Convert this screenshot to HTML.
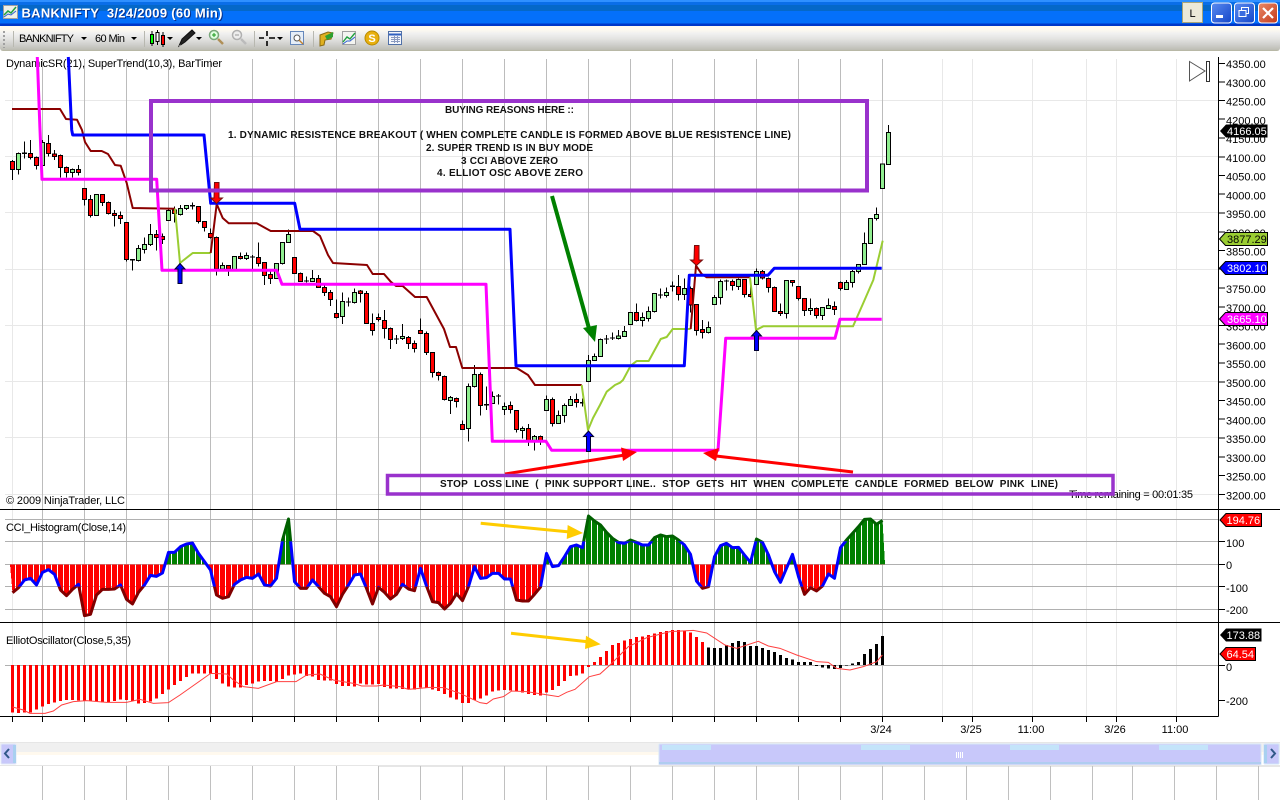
<!DOCTYPE html>
<html><head><meta charset="utf-8"><title>BANKNIFTY 3/24/2009 (60 Min)</title>
<style>
html,body{margin:0;padding:0;background:#fff;width:1280px;height:800px;overflow:hidden}
svg{display:block;font-family:"Liberation Sans",Arial,sans-serif}
text{white-space:pre}
.a{font-size:11px;fill:#000}
.b{font-size:10px;font-weight:bold;fill:#111}
.w{font-size:11px;fill:#fff}
</style></head><body>
<svg xmlns="http://www.w3.org/2000/svg" width="1280" height="800" viewBox="0 0 1280 800">
<defs>
<linearGradient id="tb" x1="0" y1="0" x2="0" y2="1">
<stop offset="0" stop-color="#2F90FF"/><stop offset=".07" stop-color="#2F90FF"/><stop offset=".08" stop-color="#0A6EE8"/><stop offset=".19" stop-color="#0A6EE8"/><stop offset=".2" stop-color="#0568C8"/><stop offset=".42" stop-color="#0568C8"/><stop offset=".43" stop-color="#0470FA"/><stop offset=".9" stop-color="#0470FA"/><stop offset=".91" stop-color="#0038C8"/><stop offset="1" stop-color="#0038C8"/>
</linearGradient>
<linearGradient id="tl" x1="0" y1="0" x2="0" y2="1">
<stop offset="0" stop-color="#FFFBF0"/><stop offset=".12" stop-color="#FFFBF0"/><stop offset=".3" stop-color="#F0F0F0"/><stop offset=".5" stop-color="#E4E4E2"/><stop offset=".75" stop-color="#CFCFCC"/><stop offset=".95" stop-color="#BDBDB4"/><stop offset="1" stop-color="#B4B49C"/>
</linearGradient>
<linearGradient id="mb" x1="0" y1="0" x2="1" y2="1"><stop offset="0" stop-color="#5A8BF0"/><stop offset="1" stop-color="#1446C8"/></linearGradient>
<linearGradient id="cb" x1="0" y1="0" x2="1" y2="1"><stop offset="0" stop-color="#E88A68"/><stop offset="1" stop-color="#C43A1A"/></linearGradient>
<pattern id="pr" patternUnits="userSpaceOnUse" x="12" y="0" width="18" height="18"><rect width="15" height="18" fill="#FF0000"/></pattern>
<pattern id="pg" patternUnits="userSpaceOnUse" x="12" y="0" width="18" height="18"><rect width="15" height="18" fill="#008000"/></pattern>
<clipPath id="cz1"><rect x="0" y="-100" width="3000" height="278"/></clipPath>
<clipPath id="cz2"><rect x="0" y="178" width="3000" height="400"/></clipPath>
<clipPath id="cl1"><rect x="0" y="-100" width="3000" height="209"/></clipPath>
<clipPath id="cl2"><rect x="0" y="109" width="3000" height="136"/></clipPath>
<clipPath id="cl3"><rect x="0" y="245" width="3000" height="400"/></clipPath>
<polyline id="ccil" fill="none" stroke-width="9" stroke-linejoin="round" points="37.5,263 55.5,248 73.5,225 91.5,220 109.5,240 127.5,202 145.5,194 163.5,208 181.5,255 199.5,272 217.5,253 235.5,238 253.5,332 271.5,328 289.5,270 307.5,253 325.5,253 343.5,252 361.5,240 379.5,283 397.5,297 415.5,262 433.5,240 451.5,211 469.5,214 487.5,204 505.5,142 523.5,142 541.5,125 559.5,117 577.5,114 595.5,145 613.5,170 631.5,195 649.5,270 667.5,280 685.5,275 703.5,238 721.5,225 739.5,217 757.5,220 775.5,207 793.5,240 811.5,243 829.5,220 847.5,105 865.5,42 883.5,230 901.5,250 919.5,250 937.5,225 955.5,245 973.5,265 991.5,275 1009.5,305 1027.5,268 1045.5,240 1063.5,210 1081.5,207 1099.5,250 1117.5,297 1135.5,247 1153.5,262 1171.5,282 1189.5,268 1207.5,238 1225.5,252 1243.5,257 1261.5,190 1279.5,243 1297.5,290 1315.5,293 1333.5,312 1351.5,295 1369.5,266 1387.5,287 1405.5,245 1423.5,185 1441.5,220 1459.5,218 1477.5,205 1495.5,205 1513.5,222 1531.5,222 1549.5,285 1567.5,288 1585.5,288 1603.5,268 1621.5,246 1639.5,145 1657.5,185 1675.5,182 1693.5,155 1711.5,125 1729.5,120 1747.5,128 1765.5,33 1783.5,48 1801.5,60 1819.5,82 1837.5,100 1855.5,112 1873.5,115 1891.5,105 1909.5,112 1927.5,120 1945.5,120 1963.5,98 1981.5,90 1999.5,95 2017.5,93 2035.5,105 2053.5,120 2071.5,148 2089.5,228 2107.5,250 2125.5,245 2143.5,155 2161.5,122 2179.5,115 2197.5,128 2215.5,127 2233.5,150 2251.5,172 2269.5,102 2287.5,112 2305.5,150 2323.5,200 2341.5,232 2359.5,190 2377.5,148 2395.5,215 2413.5,268 2431.5,248 2449.5,258 2467.5,243 2485.5,207 2503.5,220 2521.5,128 2539.5,105 2557.5,85 2575.5,65 2593.5,43 2611.5,42 2629.5,58 2647.5,46"/>
<polygon id="ccia" points="30,178 37.5,263 55.5,248 73.5,225 91.5,220 109.5,240 127.5,202 145.5,194 163.5,208 181.5,255 199.5,272 217.5,253 235.5,238 253.5,332 271.5,328 289.5,270 307.5,253 325.5,253 343.5,252 361.5,240 379.5,283 397.5,297 415.5,262 433.5,240 451.5,211 469.5,214 487.5,204 505.5,142 523.5,142 541.5,125 559.5,117 577.5,114 595.5,145 613.5,170 631.5,195 649.5,270 667.5,280 685.5,275 703.5,238 721.5,225 739.5,217 757.5,220 775.5,207 793.5,240 811.5,243 829.5,220 847.5,105 865.5,42 883.5,230 901.5,250 919.5,250 937.5,225 955.5,245 973.5,265 991.5,275 1009.5,305 1027.5,268 1045.5,240 1063.5,210 1081.5,207 1099.5,250 1117.5,297 1135.5,247 1153.5,262 1171.5,282 1189.5,268 1207.5,238 1225.5,252 1243.5,257 1261.5,190 1279.5,243 1297.5,290 1315.5,293 1333.5,312 1351.5,295 1369.5,266 1387.5,287 1405.5,245 1423.5,185 1441.5,220 1459.5,218 1477.5,205 1495.5,205 1513.5,222 1531.5,222 1549.5,285 1567.5,288 1585.5,288 1603.5,268 1621.5,246 1639.5,145 1657.5,185 1675.5,182 1693.5,155 1711.5,125 1729.5,120 1747.5,128 1765.5,33 1783.5,48 1801.5,60 1819.5,82 1837.5,100 1855.5,112 1873.5,115 1891.5,105 1909.5,112 1927.5,120 1945.5,120 1963.5,98 1981.5,90 1999.5,95 2017.5,93 2035.5,105 2053.5,120 2071.5,148 2089.5,228 2107.5,250 2125.5,245 2143.5,155 2161.5,122 2179.5,115 2197.5,128 2215.5,127 2233.5,150 2251.5,172 2269.5,102 2287.5,112 2305.5,150 2323.5,200 2341.5,232 2359.5,190 2377.5,148 2395.5,215 2413.5,268 2431.5,248 2449.5,258 2467.5,243 2485.5,207 2503.5,220 2521.5,128 2539.5,105 2557.5,85 2575.5,65 2593.5,43 2611.5,42 2629.5,58 2647.5,46 2655,178"/>
</defs>

<!-- title bar -->
<rect x="0" y="0" width="1280" height="26" fill="url(#tb)"/>
<rect x="3.5" y="5.5" width="14" height="13" fill="#F0F0E8" stroke="#A0A0A0"/>
<path d="M4 15l4-4 3 2 5-6" fill="none" stroke="#20A040" stroke-width="1.5"/><path d="M4 17l4-3 3 1 5-4" fill="none" stroke="#3060D0"/>
<text x="22.5" y="18.5" font-size="13" font-weight="bold" fill="#06308a" textLength="201">BANKNIFTY  3/24/2009 (60 Min)</text>
<text x="21.5" y="17.5" font-size="13" font-weight="bold" fill="#fff" textLength="201">BANKNIFTY  3/24/2009 (60 Min)</text>
<rect x="1182.5" y="2.5" width="20" height="20" fill="#ECE9D8" stroke="#A8A478"/>
<text x="1192.5" y="17" font-size="11" fill="#000" text-anchor="middle">L</text>
<rect x="1211.5" y="3" width="20" height="20" rx="3" fill="url(#mb)" stroke="#fff"/>
<rect x="1216" y="15" width="7" height="3" fill="#fff"/>
<rect x="1234.5" y="3" width="20" height="20" rx="3" fill="url(#mb)" stroke="#fff"/>
<rect x="1241.5" y="7.5" width="7" height="6" fill="none" stroke="#fff"/><rect x="1239" y="10.5" width="7" height="6" fill="#3A6CE0" stroke="#fff"/>
<rect x="1258.5" y="3" width="19" height="20" rx="3" fill="url(#cb)" stroke="#fff"/>
<path d="M1263 8l10 10M1273 8l-10 10" stroke="#fff" stroke-width="2.2"/>

<!-- toolbar -->
<rect x="0" y="26" width="1280" height="25" rx="3" fill="url(#tl)"/>
<path d="M4 31v17" stroke="#A0A0A0" stroke-width="2" stroke-dasharray="2 2"/>
<path d="M13.5 31v16M144.5 31v16M254.5 31v16M313.5 31v16" stroke="#B8B8B0"/>
<text x="19" y="42" class="a" fill="#000" textLength="55">BANKNIFTY</text>
<path d="M81 37h6l-3 3zM131 37h6l-3 3zM167 37h6l-3 3zM196 37h6l-3 3zM277 37h6l-3 3z" fill="#000"/>
<text x="95" y="42" class="a" textLength="30">60 Min</text>
<!-- candle icon -->
<path d="M152 31v15M157.500 30v15M163 32v15" stroke="#000"/>
<rect x="150.500" y="34.500" width="3" height="9" fill="#00FF00" stroke="#000"/><rect x="156" y="32.500" width="3" height="9" fill="#fff" stroke="#000"/><rect x="161.500" y="35.500" width="3" height="9" fill="#FF0000" stroke="#000"/>
<!-- pencil -->
<path d="M179 46l3-7 10-9 3 3-10 9z" fill="#222" stroke="#111"/><path d="M179 46l2-1" stroke="#888"/>
<!-- zoom in/out -->
<circle cx="214" cy="35" r="4.500" fill="#E0FFE0" stroke="#7AA87A" stroke-width="1.500"/><path d="M212 35h4M214 33v4" stroke="#1C9A1C"/><path d="M218 39l5 5" stroke="#B09058" stroke-width="2.500"/>
<circle cx="237" cy="35" r="4.500" fill="#EDEDED" stroke="#B0B0B0" stroke-width="1.500"/><path d="M235 35h4" stroke="#999"/><path d="M241 39l5 5" stroke="#BBB" stroke-width="2.500"/>
<!-- crosshair -->
<path d="M259 38h5M269 38h6M267 31v5M267 41v5" stroke="#000" stroke-width="1.600"/>
<!-- doc icon -->
<rect x="290.500" y="31.500" width="13" height="13" fill="#E6EEF8" stroke="#6688BB"/><circle cx="297" cy="38" r="3" fill="#fff" stroke="#555"/><path d="M299 40l4 4" stroke="#C08030" stroke-width="1.500"/>
<!-- compare icons -->
<path d="M320 35l8-3 5 1-2 6-6 1-1 5-4 1z" fill="#E0B020" stroke="#8A6A10"/><path d="M325 36l8-4v5l-6 3z" fill="#2EA030"/>
<rect x="342.500" y="31.500" width="13" height="13" fill="#F4F4F0" stroke="#A0A0A0"/><path d="M343 42l4-5 3 2 5-6" fill="none" stroke="#20A040" stroke-width="1.400"/><path d="M343 44l4-3 3 0 5-4" fill="none" stroke="#3060D0"/>
<circle cx="372" cy="38" r="7" fill="#E8B010" stroke="#B88A00"/><text x="372" y="42" font-size="11" font-weight="bold" fill="#fff" text-anchor="middle">S</text>
<rect x="388.500" y="31.500" width="13" height="13" fill="#F4F6FC" stroke="#5070A8"/><path d="M389 34.500h12" stroke="#3060C0" stroke-width="2"/><path d="M391 37.500h9M391 39.500h9M391 41.500h9M394.500 36v7M397.500 36v7" stroke="#8A9AC0"/>

<!-- grid -->
<path d="M5 100.500H1218M5 156.500H1218M5 212.500H1218M5 269.500H1218M5 325.500H1218M5 381.500H1218M5 437.500H1218M5 494.500H1218" stroke="#E8E8E8" fill="none"/>
<path d="M12.500 59V716M942.500 59V716M972.500 59V716M1032.500 59V716M1086.500 59V716M1116.500 59V716M1176.500 59V716" stroke="#E8E8E8" fill="none"/>
<path d="M42.500 59V716M84.500 59V716M126.500 59V716M168.500 59V716M210.500 59V716M252.500 59V716M294.500 59V716M336.500 59V716M378.500 59V716M420.500 59V716M462.500 59V716M504.500 59V716M546.500 59V716M588.500 59V716M630.500 59V716M672.500 59V716M714.500 59V716M756.500 59V716M798.500 59V716M840.500 59V716M882.500 59V716" stroke="#BCBCBC" fill="none"/>
<path d="M5 519.500H1218M5 541.500H1218M5 564.500H1218M5 586.500H1218M5 609.500H1218M5 665.500H1218" stroke="#B0B0B0" fill="none"/>

<text x="6" y="67" class="a" textLength="216">DynamicSR(21), SuperTrend(10,3), BarTimer</text>
<text x="6" y="504" class="a" textLength="119">© 2009 NinjaTrader, LLC</text>
<text x="6" y="531" class="a" textLength="120">CCI_Histogram(Close,14)</text>
<text x="6" y="644" class="a" textLength="125">ElliotOscillator(Close,5,35)</text>
<text x="1069" y="498" class="a" textLength="124">Time remaining = 00:01:35</text>

<!-- play icon -->
<path d="M1189.500 61.500L1205 71L1189.500 81Z" fill="#fff" stroke="#555"/><rect x="1206.500" y="61.500" width="3" height="20" fill="#fff" stroke="#333"/>

<!-- candles: block 1 -->
<g transform="translate(0,130) scale(.33333333)" shape-rendering="crispEdges">
<path fill="none" stroke="#000" stroke-width="3" d="M37.500 90V150M55.500 68V134M73.500 34V85M91.500 30V88M109.500 80V118M127.500 30V106M145.500 15V80M163.500 60V90M181.500 73V142M199.500 110V142M217.500 115V142M235.500 105V137M253.500 175V226M271.500 195V262M289.500 192V257M307.500 194V228M325.500 215V254M343.500 240V290M361.500 245V282M379.500 276V395M397.500 388V422M415.500 345V395M433.500 323V370M451.500 282V348M469.500 300V362M487.500 310V342M505.500 235V273M523.500 230V278M541.500 225V256M559.500 225V240M577.500 218V238M595.500 228V280M613.500 273V305M631.500 295V325M649.500 320V437M667.500 398V417M685.500 406V438M703.500 378V418M721.500 368V388M739.500 367V390M757.500 375V420M775.500 337V410M793.500 396V465M811.500 420V462M829.500 400V445M847.500 337V404M865.500 298V338M883.500 382V432"/>
<path fill="#FF0000" stroke="#000" stroke-width="3" d="M31.500 94h12V118h-12zM85.500 70h12V82h-12zM103.500 82h12V106h-12zM139.500 40h12V70h-12zM157.500 72h12V79h-12zM175.500 76h12V112h-12zM193.500 112h12V127h-12zM229.500 118h12V127h-12zM247.500 176h12V208h-12zM265.500 208h12V256h-12zM301.500 194h12V217h-12zM319.500 217h12V250h-12zM337.500 250h12V256h-12zM355.500 256h12V265h-12zM373.500 278h12V388h-12zM463.500 313h12V322h-12zM481.500 319h12V328h-12zM517.500 240h12V250h-12zM589.500 229h12V274h-12zM607.500 274h12V292h-12zM625.500 310h12V322h-12zM643.500 322h12V417h-12zM679.500 406h12V417h-12zM715.500 379h12V385h-12zM769.500 382h12V400h-12zM787.500 397h12V436h-12zM805.500 433h12V445h-12zM877.500 382h12V430h-12z"/>
<path fill="#90EE90" stroke="#000" stroke-width="3" d="M49.500 70h12V118h-12zM121.500 38h12V106h-12zM211.500 119h12V127h-12zM283.500 194h12V256h-12zM409.500 355h12V391h-12zM427.500 343h12V358h-12zM445.500 313h12V343h-12zM499.500 242h12V272h-12zM535.500 235h12V254h-12zM553.500 226h12V235h-12zM661.500 406h12V417h-12zM697.500 379h12V418h-12zM733.500 376h12V385h-12zM823.500 400h12V445h-12zM841.500 338h12V400h-12zM859.500 313h12V337h-12z"/>
<path fill="none" stroke="#000" stroke-width="4" d="M66 70h15M390 389h15M570 227h15M750 381h15"/>
</g>
<!-- candles: block 2 -->
<g transform="translate(300,270) scale(.33333333)" shape-rendering="crispEdges">
<path fill="none" stroke="#000" stroke-width="3" d="M1.500 8V36M19.500 20V38M37.500 0V36M55.500 15V52M73.500 45V78M91.500 60V108M109.500 88V145M127.500 67V162M145.500 82V110M163.500 55V100M181.500 60V98M199.500 63V162M217.500 130V197M235.500 130V155M253.500 120V205M271.500 172V237M289.500 195V222M307.500 162V210M325.500 198V237M343.500 212V248M361.500 145V190M379.500 185V255M397.500 247V322M415.500 305V332M433.500 317V392M451.500 378V432M469.500 382V412M487.500 452V480M505.500 340V515M523.500 285V352M541.500 308V437M559.500 350V420M577.500 365V402M595.500 372V403M613.500 398V435M631.500 395V430M649.500 420V487M667.500 470V505M685.500 462V528M703.500 495V542M721.500 497V525M739.500 376V422M757.500 382V470M775.500 422V460M793.500 400V457M811.500 378V408M829.500 370V412M847.500 385V410M865.500 255V335M883.500 250V272M901.500 205V260M919.500 195V222M937.500 187V210"/>
<path fill="#FF0000" stroke="#000" stroke-width="3" d="M-4.500 10h12V34h-12zM49.500 25h12V52h-12zM67.500 52h12V68h-12zM85.500 68h12V88h-12zM103.500 130h12V143h-12zM175.500 63h12V71h-12zM193.500 70h12V160h-12zM211.500 160h12V181h-12zM229.500 142h12V148h-12zM247.500 151h12V176h-12zM265.500 175h12V208h-12zM319.500 203h12V221h-12zM337.500 220h12V236h-12zM355.500 181h12V190h-12zM373.500 190h12V247h-12zM391.500 247h12V307h-12zM409.500 308h12V316h-12zM427.500 319h12V388h-12zM463.500 385h12V395h-12zM481.500 464h12V478h-12zM535.500 313h12V406h-12zM625.500 406h12V418h-12zM643.500 421h12V478h-12zM679.500 475h12V515h-12zM715.500 499h12V512h-12zM751.500 388h12V461h-12zM823.500 388h12V397h-12z"/>
<path fill="#90EE90" stroke="#000" stroke-width="3" d="M31.500 25h12V35h-12zM121.500 94h12V140h-12zM157.500 67h12V97h-12zM301.500 199h12V206h-12zM445.500 382h12V391h-12zM499.500 350h12V475h-12zM517.500 313h12V350h-12zM571.500 380h12V401h-12zM607.500 409h12V418h-12zM661.500 475h12V481h-12zM697.500 499h12V515h-12zM733.500 388h12V422h-12zM769.500 436h12V460h-12zM787.500 406h12V436h-12zM805.500 388h12V406h-12zM859.500 271h12V334h-12zM877.500 259h12V271h-12zM895.500 208h12V259h-12z"/>
<path fill="none" stroke="#000" stroke-width="4" d="M12 33h15M138 96h15M282 207h15M552 404h15M588 378h15M840 398h15M912 207h15M930 204h15"/>
</g>
<!-- candles: block 3 -->
<g transform="translate(580,200) scale(.33333333)" shape-rendering="crispEdges">
<path fill="none" stroke="#000" stroke-width="3" d="M115.500 390V418M133.500 378V410M151.500 336V375M169.500 310V365M187.500 338V380M205.500 320V365M223.500 280V337M241.500 265V295M259.500 262V292M277.500 245V275M295.500 225V302M313.500 235V300M331.500 260V338M349.500 313V407M367.500 360V415M385.500 365V400M403.500 285V314M421.500 238V314M439.500 238V272M457.500 238V272M475.500 236V270M493.500 237V292M511.500 232V292M529.500 205V253M547.500 210V238M565.500 232V278M583.500 260V335M601.500 310V348M619.500 240V355M637.500 240V260M655.500 258V302M673.500 295V348M691.500 295V345M709.500 323V355M727.500 322V360M745.500 295V327M763.500 305V345M781.500 245V272M799.500 240V270M817.500 210V262M835.500 192V220M853.500 97V193M871.500 55V131M889.500 22V62M907.500 -108V-35M925.500 -225V-107"/>
<path fill="#FF0000" stroke="#000" stroke-width="3" d="M163.500 338h12V361h-12zM289.500 259h12V283h-12zM325.500 265h12V315h-12zM343.500 313h12V391h-12zM361.500 388h12V397h-12zM451.500 244h12V257h-12zM487.500 238h12V283h-12zM505.500 284h12V290h-12zM541.500 215h12V234h-12zM559.500 236h12V262h-12zM577.500 262h12V334h-12zM595.500 334h12V341h-12zM631.500 241h12V247h-12zM649.500 259h12V295h-12zM667.500 295h12V331h-12zM703.500 325h12V346h-12zM757.500 320h12V328h-12zM775.500 248h12V265h-12z"/>
<path fill="#90EE90" stroke="#000" stroke-width="3" d="M109.500 408h12V415h-12zM127.500 394h12V409h-12zM145.500 338h12V373h-12zM181.500 352h12V362h-12zM199.500 334h12V355h-12zM217.500 280h12V334h-12zM253.500 277h12V286h-12zM307.500 265h12V283h-12zM379.500 382h12V397h-12zM397.500 292h12V313h-12zM415.500 244h12V292h-12zM469.500 238h12V260h-12zM523.500 215h12V253h-12zM613.500 241h12V341h-12zM685.500 325h12V331h-12zM721.500 323h12V346h-12zM739.500 317h12V326h-12zM793.500 247h12V268h-12zM811.500 214h12V247h-12zM829.500 194h12V214h-12zM847.500 131h12V193h-12zM865.500 55h12V130h-12zM883.500 43h12V55h-12zM901.500 -108h12V-35h-12zM919.500 -203h12V-107h-12z"/>
<path fill="none" stroke="#000" stroke-width="4" d="M234 285h15M270 259h15M432 243h15"/>
</g>

<!-- indicator lines -->
<g fill="none" stroke-linejoin="round">
<polyline stroke="#8B0000" stroke-width="2" points="12,109 60,109 66,119 77,119.700 82,130 85,142 90.700,151 101.700,151 108,154 115,165 120.700,165.700 126.700,183 132.700,208 175,208.700"/>
<polyline stroke="#9ACD32" stroke-width="2" points="175,208.700 180,263 192.700,253 210.700,253"/>
<polyline stroke="#8B0000" stroke-width="2" points="210.700,253 216.700,204 222.700,218 228.700,223.300 256.700,223.300 270.700,231 313,231 320,236 328,255 333,263 367,265 372.700,274 384,274 390.700,281.700 396,286 402.700,286 415,297 426.700,297 444,329 450,347 456,347 462.300,368 516.700,368 528,375 535,385 581.700,385"/>
<polyline stroke="#9ACD32" stroke-width="2" points="581.700,385 588,430 593,418 600,405 606.700,391.700 615,385 620,382.700 623,380 630.700,365.700 636.700,361 648.700,361 660.700,339 666.700,337 672.700,329 690.700,329"/>
<polyline stroke="#8B0000" stroke-width="2" points="690.700,329 696,265.700 701.700,274 706.700,277.300 750,277.300"/>
<polyline stroke="#9ACD32" stroke-width="2" points="750,277.300 756,330 763.300,326.300 853,326.300 863.300,303 873.300,280 882.700,240.700"/>
<polyline stroke="#0000FF" stroke-width="3" points="68.300,57 71.700,130 72.700,135 204,135 210.700,203.300 294.700,203.300 300,229.300 510,229.300 516,365.700 684.300,365.700 689.300,275.300 768,275.300 774.300,268.300 881.700,268.300"/>
<polyline stroke="#FF00FF" stroke-width="3" points="37.300,57 40,130 42,179.300 156.700,179.300 162,270.300 276.700,270.300 282,284.300 486,284.300 492.300,441.300 546,441.300 551.700,450.300 718,450.300 725.700,338.300 835,338.300 840,319.300 881.700,319.300"/>
</g>

<!-- signal arrows -->
<path d="M214.500 182.500h4.500V198h3.500l-6 5.500-6-5.500h3.500z" fill="#FF0000" stroke="#701010"/>
<path d="M694.500 245.500h4.500V260h3.500l-6 5.500-6-5.500h3.500z" fill="#FF0000" stroke="#701010"/>
<path d="M180 263.500l5 5.500h-3V283.500h-4V269h-3z" fill="#0000FF" stroke="#000030"/>
<path d="M588.500 431l5 5.500h-3V451.500h-4V436.500h-3z" fill="#0000FF" stroke="#000030"/>
<path d="M756.500 330.500l5 5.500h-3V350.500h-4V336h-3z" fill="#0000FF" stroke="#000030"/>

<!-- CCI -->
<g transform="translate(0,505) scale(.33333333)">
<g clip-path="url(#cz1)"><use href="#ccia" fill="url(#pg)" shape-rendering="crispEdges"/></g>
<g clip-path="url(#cz2)"><use href="#ccia" fill="url(#pr)" shape-rendering="crispEdges"/></g>
<g clip-path="url(#cl1)"><use href="#ccil" stroke="#006000"/></g>
<g clip-path="url(#cl2)"><use href="#ccil" stroke="#0000FF"/></g>
<g clip-path="url(#cl3)"><use href="#ccil" stroke="#800000"/></g>
</g>

<!-- Elliot -->
<g transform="translate(0,505) scale(.33333333)" shape-rendering="crispEdges" fill="none" stroke-width="9">
<path stroke="#FF0000" d="M37.500 480V622M55.500 480V624M73.500 480V623M91.500 480V622M109.500 480V614M127.500 480V604M145.500 480V597M163.500 480V593M181.500 480V588M199.500 480V585M217.500 480V585M235.500 480V586M253.500 480V586M271.500 480V588M289.500 480V590M307.500 480V592M325.500 480V592M343.500 480V588M361.500 480V583M379.500 480V585M397.500 480V588M415.500 480V595M433.500 480V594M451.500 480V590M469.500 480V580M487.500 480V567M505.500 480V553M523.500 480V540M541.500 480V528M559.500 480V516M577.500 480V505M595.500 480V505M613.500 480V505M631.500 480V505M649.500 480V522M667.500 480V535M685.500 480V544M703.500 480V548M721.500 480V548M739.500 480V540M757.500 480V535M775.500 480V530M793.500 480V528M811.500 480V528M829.500 480V530M847.500 480V522M865.500 480V512M883.500 480V508M901.500 480V505M919.500 480V513M937.500 480V514M955.500 480V525M973.500 480V527M991.500 480V527M1009.500 480V537M1027.500 480V543M1045.500 480V543M1063.500 480V545M1081.500 480V536M1099.500 480V539M1117.500 480V539M1135.500 480V537M1153.500 480V546M1171.500 480V550M1189.500 480V551M1207.500 480V552M1225.500 480V553M1243.500 480V553M1261.500 480V547M1279.500 480V547"/>
</g>
<g transform="translate(430,505) scale(.33333333)" shape-rendering="crispEdges" fill="none" stroke-width="9">
<path stroke="#FF0000" d="M7.500 480V553M25.500 480V558M43.500 480V567M61.500 480V578M79.500 480V584M97.500 480V594M115.500 480V594M133.500 480V585M151.500 480V580M169.500 480V572M187.500 480V560M205.500 480V556M223.500 480V555M241.500 480V556M259.500 480V560M277.500 480V563M295.500 480V567M313.500 480V570M331.500 480V572M349.500 480V562M367.500 480V555M385.500 480V543M403.500 480V528M421.500 480V513M439.500 480V512M457.500 480V505M475.500 480V486M493.500 480V471M511.500 480V456M529.500 480V438M547.500 480V420M565.500 480V414M583.500 480V407M601.500 480V402M619.500 480V396M637.500 480V394M655.500 480V390M673.500 480V385M691.500 480V381M709.500 480V378M727.500 480V375M745.500 480V375M763.500 480V378M781.500 480V383M799.500 480V396M817.500 480V411"/>
<path stroke="#000" d="M835.500 480V427M853.500 480V429M871.500 480V429M889.500 480V420M907.500 480V414M925.500 480V408M943.500 480V411M961.500 480V423M979.500 480V423M997.500 480V429M1015.500 480V435M1033.500 480V441M1051.500 480V450M1069.500 480V459M1087.500 480V464M1105.500 480V471M1123.500 480V471M1141.500 480V471M1159.500 480V483M1177.500 480V487M1195.500 480V490M1213.500 480V492M1231.500 480V489M1249.500 480V481M1267.500 480V476M1285.500 480V471M1303.500 480V447M1321.500 480V432M1339.500 480V417M1357.500 480V393"/>
</g>
<g transform="translate(0,505) scale(.33333333)"><polyline fill="none" stroke="#FF4040" stroke-width="3" points="38,606 70,615 90,625 135,625 160,618 185,600 220,590 260,587 320,592 380,592 420,583 460,595 505,593 540,570 632,505 680,507 700,525 730,545 775,550 830,530 888,530 920,510 960,507 1000,525 1060,535 1085,543 1130,543 1150,540 1200,545 1225,553 1290,547"/></g>
<g transform="translate(430,505) scale(.33333333)"><polyline fill="none" stroke="#FF4040" stroke-width="3" points="0,547 40,548 90,565 150,593 170,596 190,582 220,575 245,558 290,560 385,575 410,562 435,553 478,515 510,507 540,480 595,425 650,398 720,380 790,376 830,384 885,420 920,430 985,409 1015,423 1050,430 1100,450 1160,470 1195,472 1220,490 1260,495 1300,485 1340,470 1357,450"/></g>

<!-- annotation arrows -->
<path d="M552 196L590 332" stroke="#008000" stroke-width="4" fill="none"/><polygon points="583,328 597,325 595,342" fill="#008000"/>
<path d="M505 474L625 455" stroke="#FF0000" stroke-width="3" fill="none"/><polygon points="637,452 621,447.500 623,461" fill="#FF0000"/>
<path d="M853 472L716 456" stroke="#FF0000" stroke-width="3" fill="none"/><polygon points="703,453 719,448 716,461" fill="#FF0000"/>
<path d="M480.700 523.300L570 532" stroke="#FFCC00" stroke-width="3" fill="none"/><polygon points="567.700,525 583,533 566.700,539" fill="#FFCC00"/>
<path d="M511 633.300L590 642" stroke="#FFCC00" stroke-width="3" fill="none"/><polygon points="586,635.700 600.700,644.300 585,649" fill="#FFCC00"/>

<!-- purple boxes -->
<rect x="151" y="101" width="716" height="89.500" fill="none" stroke="#9932CC" stroke-width="4"/>
<rect x="387.500" y="475.500" width="725.500" height="18.500" fill="none" stroke="#9932CC" stroke-width="3.500"/>
<text x="445" y="113" class="b" textLength="129">BUYING REASONS HERE ::</text>
<text x="228" y="138" class="b" textLength="563">1. DYNAMIC RESISTENCE BREAKOUT ( WHEN COMPLETE CANDLE IS FORMED ABOVE BLUE RESISTENCE LINE)</text>
<text x="426" y="151" class="b" textLength="167">2. SUPER TREND IS IN BUY MODE</text>
<text x="461" y="164" class="b" textLength="97">3 CCI ABOVE ZERO</text>
<text x="437" y="176" class="b" textLength="146">4. ELLIOT OSC ABOVE ZERO</text>
<text x="440" y="487" class="b" textLength="618">STOP  LOSS LINE  (  PINK SUPPORT LINE..  STOP  GETS  HIT  WHEN  COMPLETE  CANDLE  FORMED  BELOW  PINK  LINE)</text>

<!-- pane separators and axes -->
<path d="M0 509.500H1280M0 622.500H1280M0 716.500H1218.500M1218.500 57V716.500" stroke="#000" fill="none"/>
<path d="M1219 63.500h6M1219 82h6M1219 100.500h6M1219 119h6M1219 138h6M1219 157h6M1219 175.500h6M1219 194h6M1219 213h6M1219 232h6M1219 250.500h6M1219 269h6M1219 288h6M1219 307h6M1219 325.500h6M1219 344h6M1219 363h6M1219 382h6M1219 400.500h6M1219 419h6M1219 438h6M1219 457h6M1219 475.500h6M1219 494.500h6M1219 541.500h6M1219 564.500h6M1219 586.500h6M1219 609.500h6M1219 665.500h6M1219 700.500h6" stroke="#000" fill="none"/>
<path d="M12.500 717v5M42.500 717v5M84.500 717v5M126.500 717v5M168.500 717v5M210.500 717v5M252.500 717v5M294.500 717v5M336.500 717v5M378.500 717v5M420.500 717v5M462.500 717v5M504.500 717v5M546.500 717v5M588.500 717v5M630.500 717v5M672.500 717v5M714.500 717v5M756.500 717v5M798.500 717v5M840.500 717v5M882.500 717v5M942.500 717v5M972.500 717v5M1032.500 717v5M1086.500 717v5M1116.500 717v5M1176.500 717v5" stroke="#000" fill="none"/>
<g class="a" font-size="11">
<text class="a" x="1226" y="68">4350.00</text><text class="a" x="1226" y="86.750">4300.00</text><text class="a" x="1226" y="105.500">4250.00</text><text class="a" x="1226" y="124.250">4200.00</text><text class="a" x="1226" y="143">4150.00</text><text class="a" x="1226" y="161.750">4100.00</text><text class="a" x="1226" y="180.500">4050.00</text><text class="a" x="1226" y="199.250">4000.00</text><text class="a" x="1226" y="218">3950.00</text><text class="a" x="1226" y="236.750">3900.00</text><text class="a" x="1226" y="255.500">3850.00</text><text class="a" x="1226" y="274.250">3800.00</text><text class="a" x="1226" y="293">3750.00</text><text class="a" x="1226" y="311.750">3700.00</text><text class="a" x="1226" y="330.500">3650.00</text><text class="a" x="1226" y="349.250">3600.00</text><text class="a" x="1226" y="368">3550.00</text><text class="a" x="1226" y="386.750">3500.00</text><text class="a" x="1226" y="405.500">3450.00</text><text class="a" x="1226" y="424.250">3400.00</text><text class="a" x="1226" y="443">3350.00</text><text class="a" x="1226" y="461.750">3300.00</text><text class="a" x="1226" y="480.500">3250.00</text><text class="a" x="1226" y="499.250">3200.00</text>
<text class="a" x="1226" y="547">100</text><text class="a" x="1226" y="569">0</text><text class="a" x="1226" y="592">-100</text><text class="a" x="1226" y="614">-200</text><text class="a" x="1226" y="671">0</text><text class="a" x="1226" y="705">-200</text>
<text class="a" x="881" y="733" text-anchor="middle">3/24</text><text class="a" x="971" y="733" text-anchor="middle">3/25</text><text class="a" x="1031" y="733" text-anchor="middle">11:00</text><text class="a" x="1115" y="733" text-anchor="middle">3/26</text><text class="a" x="1175" y="733" text-anchor="middle">11:00</text>
</g>

<!-- price tags -->
<path d="M1220 131l6-6.500H1267.500V137.500H1226Z" fill="#000"/><text class="w" x="1227" y="135">4166.05</text>
<path d="M1219.500 239l6-6.500H1267.500V245.500H1225.500Z" fill="#9ACD32" stroke="#000"/><text class="a" x="1227" y="243">3877.29</text>
<path d="M1219.500 268l6-6.500H1267.500V274.500H1225.500Z" fill="#0000FF" stroke="#000"/><text class="w" x="1227" y="272">3802.10</text>
<path d="M1219.500 319l6-6.500H1267.500V325.500H1225.500Z" fill="#FF00FF" stroke="#000"/><text class="w" x="1227" y="323">3665.10</text>
<path d="M1220 520l6-6.500H1261.500V526.500H1226Z" fill="#FF0000" stroke="#000"/><text class="w" x="1226.500" y="524">194.76</text>
<path d="M1220 635l6-6.500H1261.500V641.500H1226Z" fill="#000"/><text class="w" x="1226.500" y="639">173.88</text>
<path d="M1220 654l6-6.500H1255.500V660.500H1226Z" fill="#FF0000" stroke="#000"/><text class="w" x="1226.500" y="658">64.54</text>

<!-- scroll bar -->
<rect x="0" y="742" width="1280" height="24" fill="#fff"/>
<rect x="0" y="743" width="1280" height="9" fill="#F0F0F0"/>
<rect x="0" y="752" width="1280" height="3" fill="#FFF9EE"/>
<path d="M0 742.500H1280M0 765.500H1280" stroke="#E6E6E6"/>
<rect x="1" y="744" width="15" height="20" rx="1" fill="#C8C8FA" stroke="#E0E8F8"/><rect x="13" y="745" width="3" height="18" fill="#A8D0F0"/>
<path d="M9 749l-4 4.500 4 4.500" fill="none" stroke="#305888" stroke-width="2"/>
<rect x="659" y="744" width="602" height="21" rx="1" fill="#C8C8FA" stroke="#D6E6F6"/>
<path d="M662 747.500H711M861 747.500H910M1010 747.500H1059M1159 747.500H1208" stroke="#C4E4FA" stroke-width="5"/>
<path d="M659 763H1261" stroke="#AFCDF0" stroke-width="2"/>
<path d="M956.500 752v6M958.500 752v6M960.500 752v6M962.500 752v6" stroke="#fff"/>
<rect x="1264" y="744" width="15" height="20" rx="1" fill="#C8C8FA" stroke="#D0E4F8"/><rect x="1264" y="745" width="3" height="18" fill="#A8D0F0"/>
<path d="M1271 749l4 4.500-4 4.500" fill="none" stroke="#305888" stroke-width="2"/>

<!-- lower empty grid -->
<rect x="378" y="765" width="902" height="2" fill="#E6E6E6"/>
<path d="M42.500 766V800M84.500 766V800M126.500 766V800M168.500 766V800M210.500 766V800M252.500 766V800M294.500 766V800M336.500 766V800M378.500 766V800M420.500 766V800M462.500 766V800M504.500 766V800M546.500 766V800M588.500 766V800M630.500 766V800M672.500 766V800M714.500 766V800M756.500 766V800M798.500 766V800M840.500 766V800M882.500 766V800M924.500 766V800M966.500 766V800M1008.500 766V800M1050.500 766V800M1092.500 766V800M1132.500 766V800M1174.500 766V800M1216.500 766V800M1258.500 766V800" stroke="#C0C0C0" fill="none"/>
</svg>
</body></html>
